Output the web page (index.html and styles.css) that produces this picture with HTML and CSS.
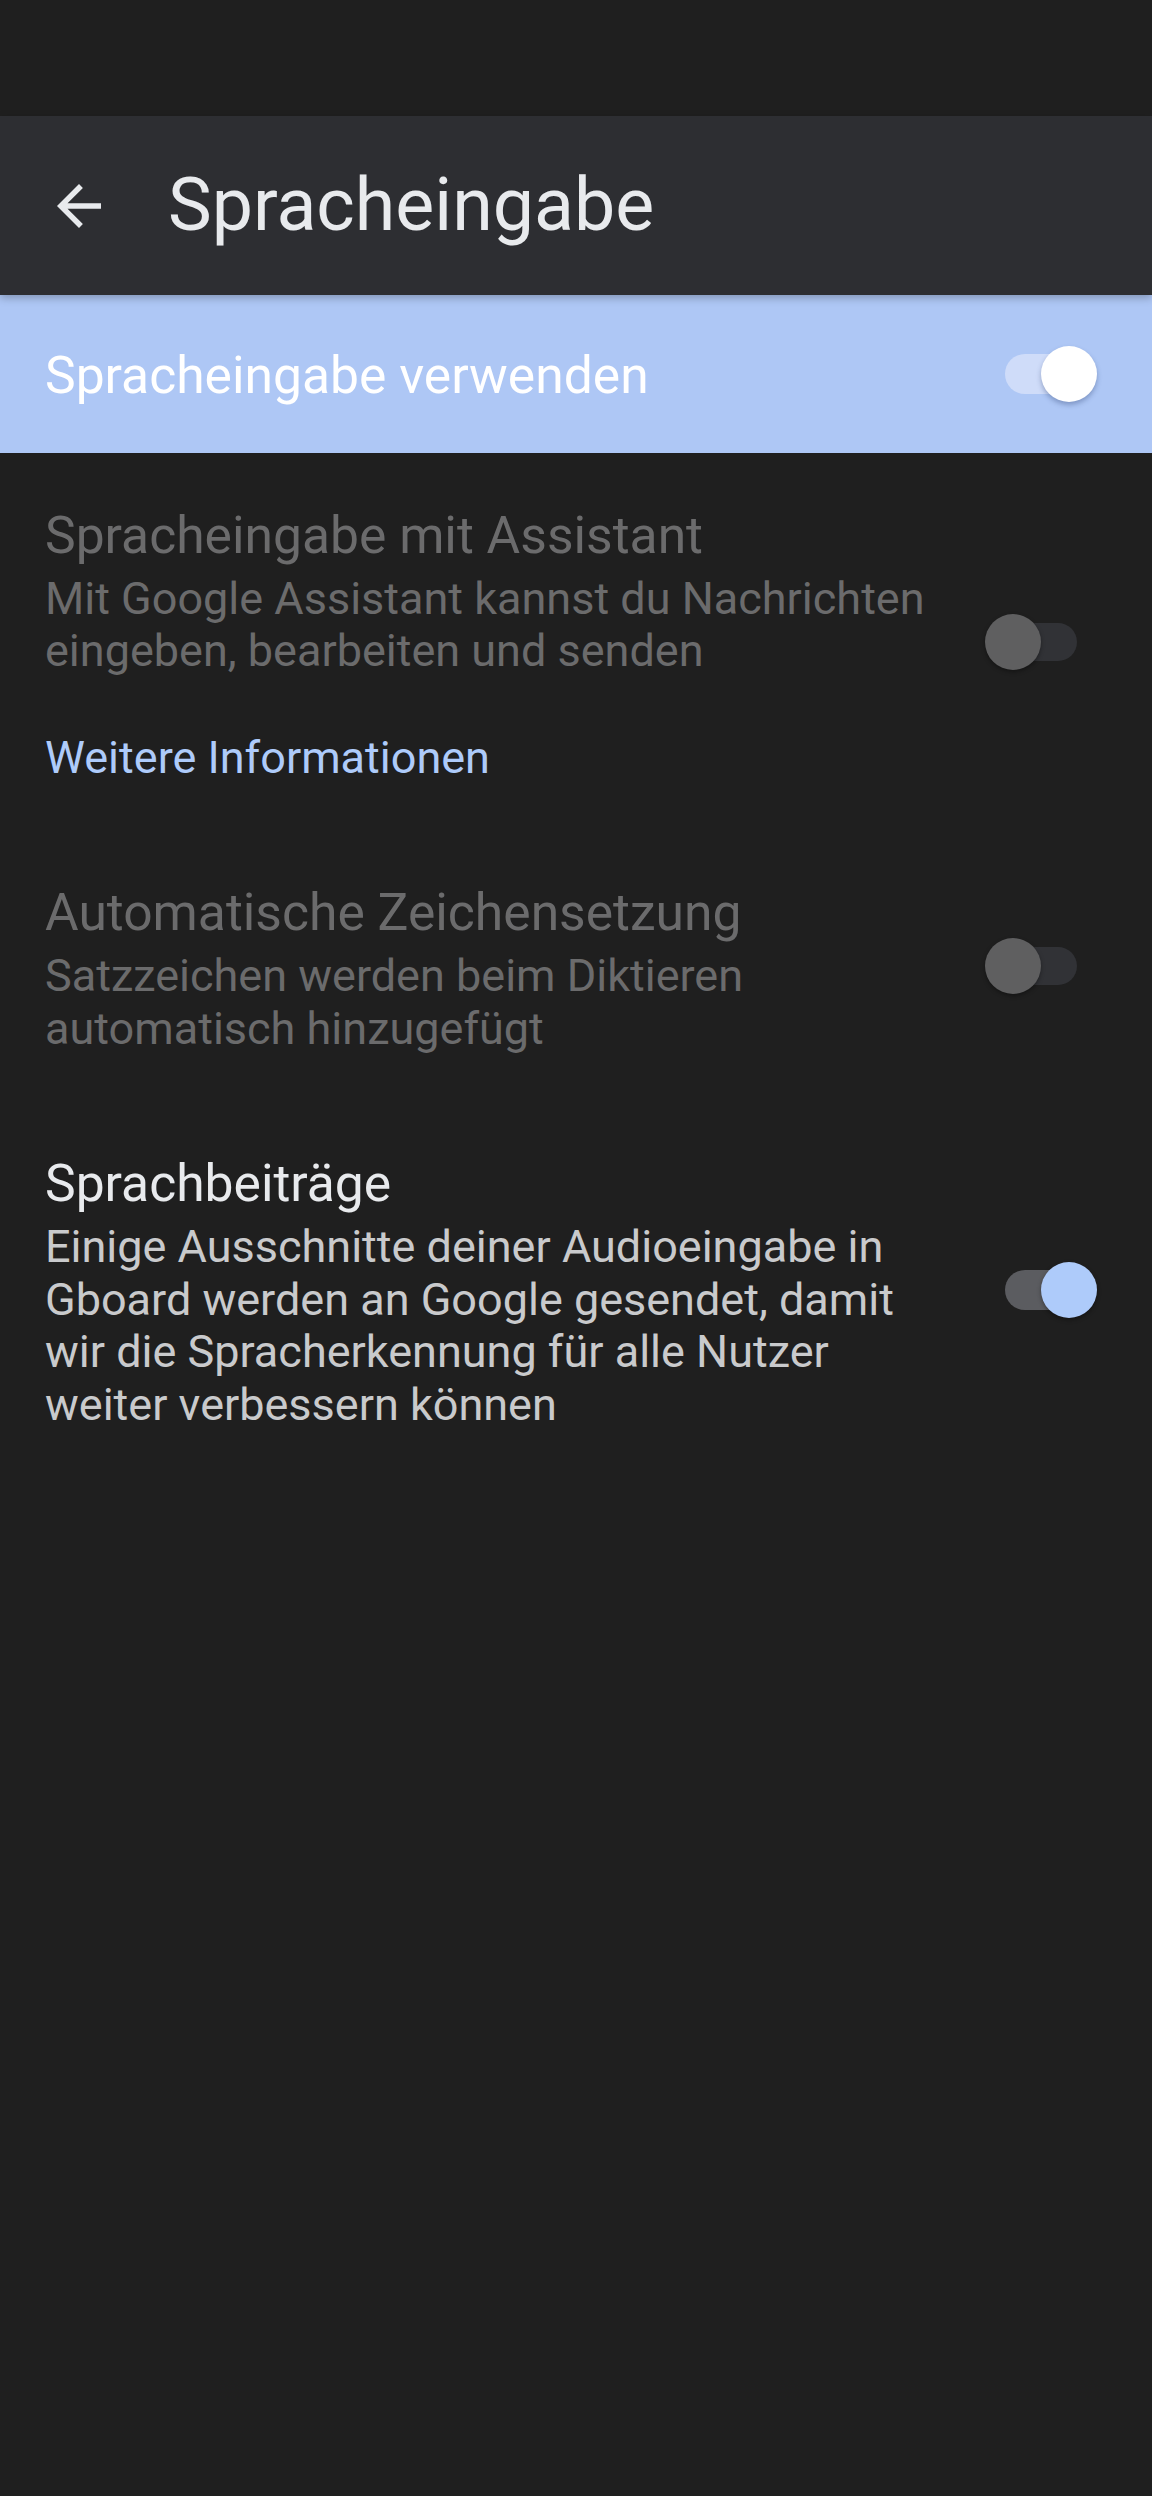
FILE: index.html
```html
<!DOCTYPE html>
<html>
<head>
<title>Spracheingabe</title>
<meta charset="UTF-8">
<meta name="viewport" content="width=device-width, initial-scale=1">
<link rel="stylesheet" href="styles.css">
</head>
<body>

<!-- Statusleiste -->
<div class="status-bar"></div>

<!-- Kopfzeile -->
<header class="app-bar">
    <svg class="back" viewBox="0 0 24 24">
        <path d="M20 11H7.83l5.59-5.59L12 4l-8 8 8 8 1.41-1.41L7.83 13H20v-2z"/>
    </svg>
    <h1 class="app-title">Spracheingabe</h1>
</header>

<!-- Hauptschalter -->
<section class="master">
    <span class="master-label">Spracheingabe verwenden</span>
    <span class="switch on light"><span class="track"></span><span class="thumb"></span></span>
</section>

<div class="pref disabled">
    <div class="pref-text">
        <div class="pref-title">Spracheingabe mit Assistant</div>
        <div class="pref-summary">Mit Google Assistant kannst du Nachrichten eingeben, bearbeiten und senden</div>
        <a class="pref-link" href="javascript:;">Weitere Informationen</a>
    </div>
    <div class="pref-widget">
        <span class="switch"><span class="track"></span><span class="thumb"></span></span>
    </div>
</div>

<div class="pref disabled">
    <div class="pref-text">
        <div class="pref-title">Automatische Zeichensetzung</div>
        <div class="pref-summary">Satzzeichen werden beim Diktieren automatisch hinzugefügt</div>
    </div>
    <div class="pref-widget">
        <span class="switch"><span class="track"></span><span class="thumb"></span></span>
    </div>
</div>

<div class="pref">
    <div class="pref-text">
        <div class="pref-title">Sprachbeiträge</div>
        <div class="pref-summary">Einige Ausschnitte deiner Audioeingabe in Gboard werden an Google gesendet, damit wir die Spracherkennung für alle Nutzer weiter verbessern können</div>
    </div>
    <div class="pref-widget">
        <span class="switch on"><span class="track"></span><span class="thumb"></span></span>
    </div>
</div>

</body>
</html>
```

FILE: styles.css
```css
/* Grundlayout */
body {
    margin: 0;
    width: 1152px;
    min-height: 2496px;
    background: #1f1f1f;
    font-family: Roboto, "Noto Sans", sans-serif;
    color: #e8eaed;
}

.status-bar {
    height: 116px;
    background: #1f1f1f;
}

/* Kopfzeile */
.app-bar {
    height: 179px;
    display: flex;
    align-items: center;
    padding-left: 46px;
    background: #2d2e32;
    position: relative;
    z-index: 1;
    box-shadow: 0 3px 8px rgba(0, 0, 0, 0.25);
}

.app-bar .back {
    width: 66px;
    height: 66px;
    fill: #e8eaed;
}

.app-title {
    margin: 0 0 0 56px;
    font-size: 73.5px;
    font-weight: 400;
    line-height: 85px;
    color: #e8eaed;
}

/* Hauptschalter */
.master {
    height: 158px;
    display: flex;
    align-items: center;
    justify-content: space-between;
    padding: 0 55px 0 45px;
    background: #aec7f5;
}

.master-label {
    padding-top: 4px;
    font-size: 51.6px;
    line-height: 60px;
    color: #ffffff;
}

/* Einstellungszeilen */
.pref {
    display: flex;
}

.pref-text {
    flex: 0 0 896px;
    padding: 52.5px 0 46.5px 45px;
}

.pref-title {
    font-size: 51.6px;
    line-height: 60px;
    color: #e8eaed;
}

.pref-summary {
    margin-top: 7px;
    font-size: 45px;
    line-height: 52.5px;
    color: #c9cacc;
}

.pref-link {
    display: block;
    margin-top: 54px;
    font-size: 45px;
    line-height: 52.5px;
    color: #aecbfa;
    text-decoration: none;
}

.pref.disabled .pref-title,
.pref.disabled .pref-summary {
    color: #6b6b6c;
}

.pref-widget {
    flex: 1;
    display: flex;
    align-items: center;
    justify-content: flex-end;
    padding-right: 55px;
}

/* Schalter */
.switch {
    position: relative;
    display: inline-block;
    width: 112px;
    height: 56px;
    flex: none;
}

.switch .track {
    position: absolute;
    left: 20px;
    top: 9px;
    width: 72px;
    height: 38px;
    border-radius: 19px;
    background: #313236;
}

.switch .thumb {
    position: absolute;
    left: 0;
    top: 0;
    width: 56px;
    height: 56px;
    border-radius: 50%;
    background: #5f5f60;
    box-shadow: 0 2px 4px rgba(0, 0, 0, 0.35);
}

.switch.on .thumb {
    left: 56px;
    background: #aecbfa;
}

.switch.on .track {
    top: 8px;
    height: 40px;
    border-radius: 20px;
    background: #5b5c60;
}

.switch.light .track {
    background: #cfdcf9;
}

.switch.light .thumb {
    background: #ffffff;
    box-shadow: 0 3px 5px rgba(40, 60, 110, 0.35);
}
```
